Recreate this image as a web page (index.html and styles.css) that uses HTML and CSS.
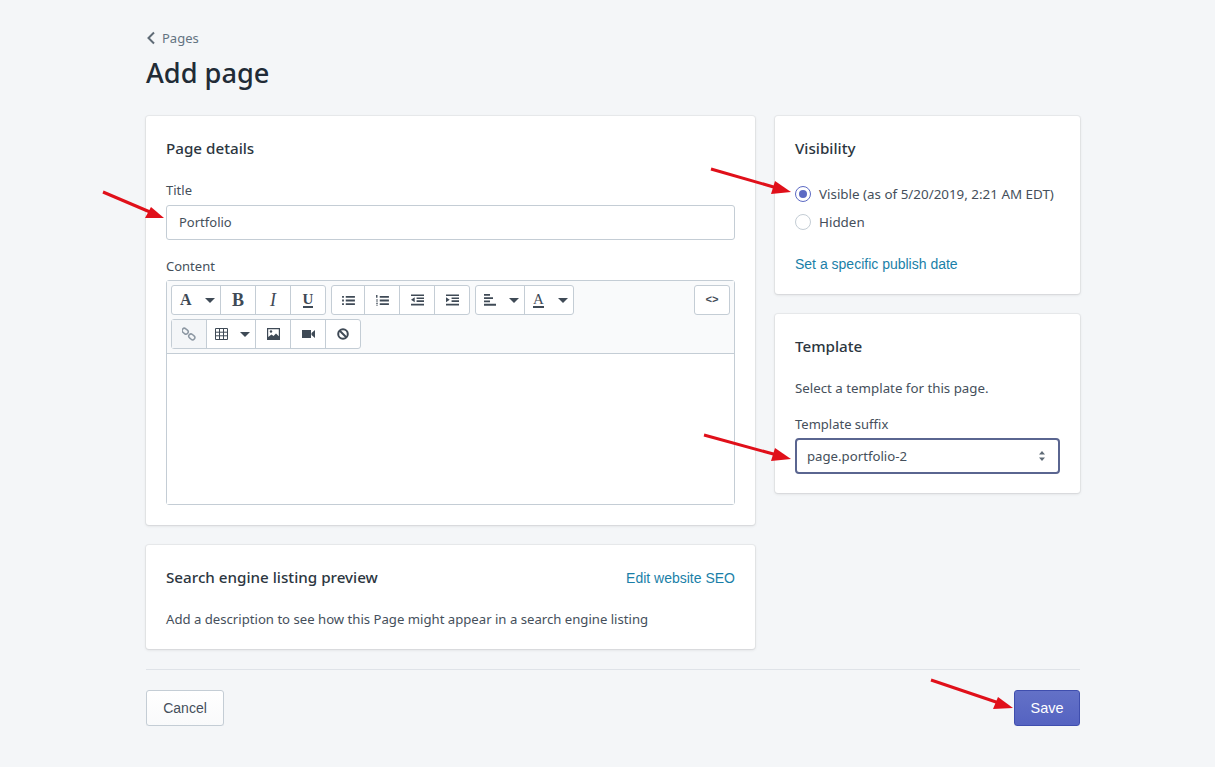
FILE: index.html
```html
<!DOCTYPE html>
<html lang="en">
<head>
  <meta charset="UTF-8" />
  <title>Add page</title>
  <link rel="stylesheet" href="styles.css">
</head>
<body>
  <div class="page">
    <a class="crumb" href="#">
      <svg width="10" height="14" viewBox="0 0 10 14"><path d="M8 1.500 2.500 7 8 12.500" fill="none" stroke="#5f6b76" stroke-width="2"/></svg>
      Pages
    </a>
    <h1>Add page</h1>

    <div class="columns">
      <div class="col-main">
        <section class="card details">
          <h2>Page details</h2>
          <label class="label">Title</label>
          <div class="input">Portfolio</div>
          <label class="label label-content">Content</label>
          <div class="editor">
            <div class="toolbar">
              <div class="tool-rows">
                <div class="tool-row">
                  <div class="group">
                    <button class="tool wide"><span class="serif">A</span><i class="caret"></i></button>
                    <button class="tool"><span class="serif bold">B</span></button>
                    <button class="tool"><span class="serif italic">I</span></button>
                    <button class="tool"><span class="serif under">U</span></button>
                  </div>
                  <div class="group">
                    <button class="tool">
                      <svg width="13" height="11" viewBox="0 0 14 12"><path d="M0 1h2v2H0zM0 5h2v2H0zM0 9h2v2H0zM4 1h10v2H4zM4 5h10v2H4zM4 9h10v2H4z" fill="#3f4a56"/></svg>
                    </button>
                    <button class="tool">
                      <svg width="13" height="11" viewBox="0 0 14 12"><path d="M0 0h1.500v3H0zM0 5h2v1H0zM0 7h2v1H0zM0 9h2v.8H0zM0 10.500h2v1H0zM4 1h10v2H4zM4 5h10v2H4zM4 9h10v2H4z" fill="#3f4a56"/></svg>
                    </button>
                    <button class="tool">
                      <svg width="13" height="12" viewBox="0 0 14 12"><path d="M0 0h14v1.800H0zM6 3.200h8v1.800H6zM6 6.400h8v1.800H6zM0 10h14v1.800H0zM4 3v5.500L0 5.750z" fill="#3f4a56"/></svg>
                    </button>
                    <button class="tool">
                      <svg width="13" height="12" viewBox="0 0 14 12"><path d="M0 0h14v1.800H0zM6 3.200h8v1.800H6zM6 6.400h8v1.800H6zM0 10h14v1.800H0zM0 3v5.500l4-2.750z" fill="#3f4a56"/></svg>
                    </button>
                  </div>
                  <div class="group">
                    <button class="tool wide">
                      <svg width="12" height="12" viewBox="0 0 12 12"><path d="M0 0h6v1.800H0zM0 3.200h9v1.800H0zM0 6.400h6v1.800H0zM0 9.800h12v1.900H0z" fill="#3f4a56"/></svg>
                      <i class="caret"></i>
                    </button>
                    <button class="tool wide"><span class="serif under-thick">A</span><i class="caret"></i></button>
                  </div>
                </div>
                <div class="tool-row">
                  <div class="group">
                    <button class="tool is-off">
                      <svg width="14" height="14" viewBox="0 0 14 14"><g fill="none" stroke="#8d98a3" stroke-width="1.500"><rect x="0" y="1.800" width="6.500" height="4.500" rx="2.200" transform="rotate(40 3 4)"/><rect x="6.500" y="7.800" width="6.500" height="4.500" rx="2.200" transform="rotate(40 10 10)"/></g></svg>
                    </button>
                    <button class="tool wide">
                      <svg width="13" height="12" viewBox="0 0 13 12"><path d="M.5.500h12v11H.5zM.5 4.200h12M.5 7.800h12M4.500.500v11M8.500.500v11" fill="none" stroke="#3f4a56"/></svg>
                      <i class="caret"></i>
                    </button>
                    <button class="tool">
                      <svg width="13" height="12" viewBox="0 0 13 12"><path d="M0 0h13v12H0z" fill="#3f4a56"/><path d="M1.200 1.200h10.600v7L9 5.500 6.500 8 4.500 6.500 1.200 9z" fill="#fff"/><circle cx="4" cy="3.500" r="1.200" fill="#3f4a56"/></svg>
                    </button>
                    <button class="tool">
                      <svg width="13" height="10" viewBox="0 0 13 10"><path d="M0 1h9v8H0zM9.500 4 13 1v8L9.500 6z" fill="#3f4a56"/></svg>
                    </button>
                    <button class="tool">
                      <svg width="12" height="12" viewBox="0 0 12 12"><circle cx="6" cy="6" r="4.800" fill="none" stroke="#3f4a56" stroke-width="2"/><path d="M2.500 2.500l7 7" stroke="#3f4a56" stroke-width="2"/></svg>
                    </button>
                  </div>
                </div>
              </div>
              <div class="group">
                <button class="tool code">&lt;&gt;</button>
              </div>
            </div>
            <div class="editor-body"></div>
          </div>
        </section>

        <section class="card seo">
          <div class="seo-head">
            <h2>Search engine listing preview</h2>
            <a class="link" href="#">Edit website SEO</a>
          </div>
          <p class="text">Add a description to see how this Page might appear in a search engine listing</p>
        </section>
      </div>

      <div class="col-side">
        <section class="card visibility">
          <h2>Visibility</h2>
          <div class="radio-row">
            <span class="radio is-on"></span>
            <span class="text">Visible (as of 5/20/2019, 2:21 AM EDT)</span>
          </div>
          <div class="radio-row">
            <span class="radio"></span>
            <span class="text">Hidden</span>
          </div>
          <a class="link date-link" href="#">Set a specific publish date</a>
        </section>

        <section class="card template">
          <h2>Template</h2>
          <p class="text template-note">Select a template for this page.</p>
          <label class="label">Template suffix</label>
          <div class="select">
            page.portfolio-2
            <svg width="8" height="12" viewBox="0 0 8 12"><path d="M4 1 7 4.500H1zM4 11 1 7.500h6z" fill="#5f6b76"/></svg>
          </div>
        </section>
      </div>
    </div>

    <div class="actions">
      <button class="btn">Cancel</button>
      <button class="btn btn-primary">Save</button>
    </div>
  </div>

  <!-- red arrows drawn on top of the screenshot -->
  <svg class="arrows" width="1215" height="767" viewBox="0 0 1215 767">
    <g stroke="#e0101a" stroke-width="3" fill="#e0101a">
      <path d="M103 192 150 212"/>
      <path d="M164 218 145 218 151 207z" stroke="none"/>
      <path d="M711 169 777 188"/>
      <path d="M791 192 771 194 775 181z" stroke="none"/>
      <path d="M704 435 777 455"/>
      <path d="M791 459 771 461 775 448z" stroke="none"/>
      <path d="M931 680 999 703"/>
      <path d="M1013 708 993 709 998 697z" stroke="none"/>
    </g>
  </svg>
</body>
</html>
```

FILE: styles.css
```css
body {
  margin: 0;
  background: #f4f6f8;
  color: #212b36;
  font-family: "Noto Sans", "Open Sans", sans-serif;
  font-size: 13px;
}

.page {
  width: 934px;
  margin-left: 146px;
  padding-top: 29px;
}

.crumb {
  display: flex;
  align-items: center;
  gap: 6px;
  height: 18px;
  color: #637381;
  font-size: 13px;
  text-decoration: none;
}

h1 {
  margin: 8px 0 0;
  font-size: 27.2px;
  font-weight: 500;
  line-height: 36px;
  color: #212b36;
}

.columns {
  display: flex;
  gap: 20px;
  margin-top: 25px;
}

.col-main {
  width: 609px;
  display: flex;
  flex-direction: column;
  gap: 20px;
}

.col-side {
  width: 305px;
  display: flex;
  flex-direction: column;
  gap: 20px;
}

.card {
  background: white;
  border-radius: 3px;
  box-shadow: 0 0 0 1px rgba(63,63,68,0.05), 0 1px 3px rgba(63,63,68,0.15);
  padding: 20px;
  box-sizing: border-box;
}

h2 {
  margin: 0;
  font-size: 15.2px;
  font-weight: 500;
  line-height: 24px;
  color: #2c3640;
}

.label {
  display: block;
  font-size: 13px;
  line-height: 18px;
  color: #454f5b;
}

.text {
  font-size: 13.3px;
  line-height: 20px;
  color: #454f5b;
}

.link {
  color: #1a7fa8;
  font-family: "Liberation Sans", Arial, sans-serif;
  font-size: 14px;
  text-decoration: none;
}

.details {
  height: 409px;
}

.details h2 {
  margin-bottom: 21px;
}

.details .label {
  margin-bottom: 6px;
}

.input {
  height: 35px;
  box-sizing: border-box;
  border: 1px solid #c4cdd5;
  border-radius: 3px;
  padding: 0 12px;
  line-height: 33px;
  font-size: 13px;
  color: #454f5b;
}

.details .label-content {
  margin-top: 17px;
  margin-bottom: 5px;
}

.editor {
  height: 225px;
  box-sizing: border-box;
  border: 1px solid #c4cdd5;
  border-radius: 3px;
  display: flex;
  flex-direction: column;
}

.toolbar {
  height: 73px;
  box-sizing: border-box;
  border-bottom: 1px solid #c4cdd5;
  background: #f9fafb;
  padding: 4px 4px 0;
  display: flex;
  justify-content: space-between;
  align-items: flex-start;
}

.tool-rows {
  display: flex;
  flex-direction: column;
  gap: 4px;
}

.tool-row {
  display: flex;
  gap: 5px;
}

.group {
  display: flex;
  height: 30px;
  box-sizing: border-box;
  background: white;
  border: 1px solid #c4cdd5;
  border-radius: 3px;
}

.tool {
  width: 35px;
  height: 28px;
  box-sizing: border-box;
  padding: 0;
  border: 0;
  border-left: 1px solid #c4cdd5;
  background: transparent;
  display: flex;
  align-items: center;
  justify-content: center;
  color: #3f4a56;
}

.tool:first-child {
  border-left: 0;
  width: 34px;
}

.group + .group .tool:first-child {
  width: 32px;
}

.tool.wide {
  width: 49px;
  justify-content: space-between;
  padding: 0 5px 0 8px;
}

.tool.wide:first-child,
.group + .group .tool.wide:first-child {
  width: 48px;
}

.tool.is-off {
  background: #f4f6f8;
}

.tool.code {
  font-family: "Liberation Mono", monospace;
  font-size: 11px;
  font-weight: bold;
}

.serif {
  font-family: "Liberation Serif", serif;
  font-size: 16px;
  font-weight: bold;
  line-height: 16px;
}

.bold {
  font-size: 18px;
}

.italic {
  font-style: italic;
  font-weight: normal;
  font-size: 18px;
}

.under {
  font-size: 15px;
  border-bottom: 2px solid #3f4a56;
  line-height: 13px;
}

.under-thick {
  font-weight: normal;
  font-size: 15px;
  border-bottom: 2px solid #3f4a56;
  line-height: 13px;
}

.caret {
  width: 0;
  height: 0;
  border-left: 5px solid transparent;
  border-right: 5px solid transparent;
  border-top: 5px solid #3f4a56;
}

.editor-body {
  flex: 1;
  background: white;
}

.seo {
  height: 104px;
}

.seo-head {
  display: flex;
  justify-content: space-between;
  align-items: center;
}

.seo-head .link {
  margin-top: 1px;
}

.seo .text {
  margin: 20px 0 0;
  font-size: 13.15px;
}

.visibility {
  height: 178px;
}

.visibility .text {
  font-size: 13.4px;
}

.radio-row {
  display: flex;
  align-items: center;
  gap: 8px;
  height: 28px;
}

.visibility h2 + .radio-row {
  margin-top: 20px;
}

.radio {
  width: 16px;
  height: 16px;
  box-sizing: border-box;
  border: 1px solid #c4cdd5;
  border-radius: 50%;
  display: flex;
  align-items: center;
  justify-content: center;
}

.radio.is-on {
  border-color: #5c6ac4;
}

.radio.is-on::after {
  content: "";
  width: 8px;
  height: 8px;
  border-radius: 50%;
  background: #5c6ac4;
}

.date-link {
  display: block;
  margin-top: 20px;
}

.template {
  height: 179px;
}

.template-note {
  margin: 20px 0 0;
}

.template .label {
  margin-top: 17px;
  margin-bottom: 5px;
}

.select {
  height: 36px;
  box-sizing: border-box;
  border: 2px solid #5a6590;
  border-radius: 4px;
  padding: 0 12px 0 10px;
  display: flex;
  align-items: center;
  justify-content: space-between;
  font-size: 13.2px;
  color: #454f5b;
}

.actions {
  margin-top: 20px;
  border-top: 1px solid #dfe3e8;
  padding-top: 20px;
  display: flex;
  justify-content: space-between;
}

.btn {
  height: 36px;
  width: 78px;
  border: 1px solid #c4cdd5;
  border-radius: 3px;
  background: linear-gradient(#fff, #f9fafb);
  color: #454f5b;
  font-family: "Liberation Sans", Arial, sans-serif;
  font-size: 14px;
  box-shadow: 0 1px 0 rgba(22,29,37,0.05);
}

.btn-primary {
  width: 66px;
  border-color: #3f4eae;
  background: linear-gradient(#6371c7, #5563c1);
  color: white;
  font-size: 14.5px;
}

.arrows {
  position: absolute;
  top: 0;
  left: 0;
  pointer-events: none;
}
```
